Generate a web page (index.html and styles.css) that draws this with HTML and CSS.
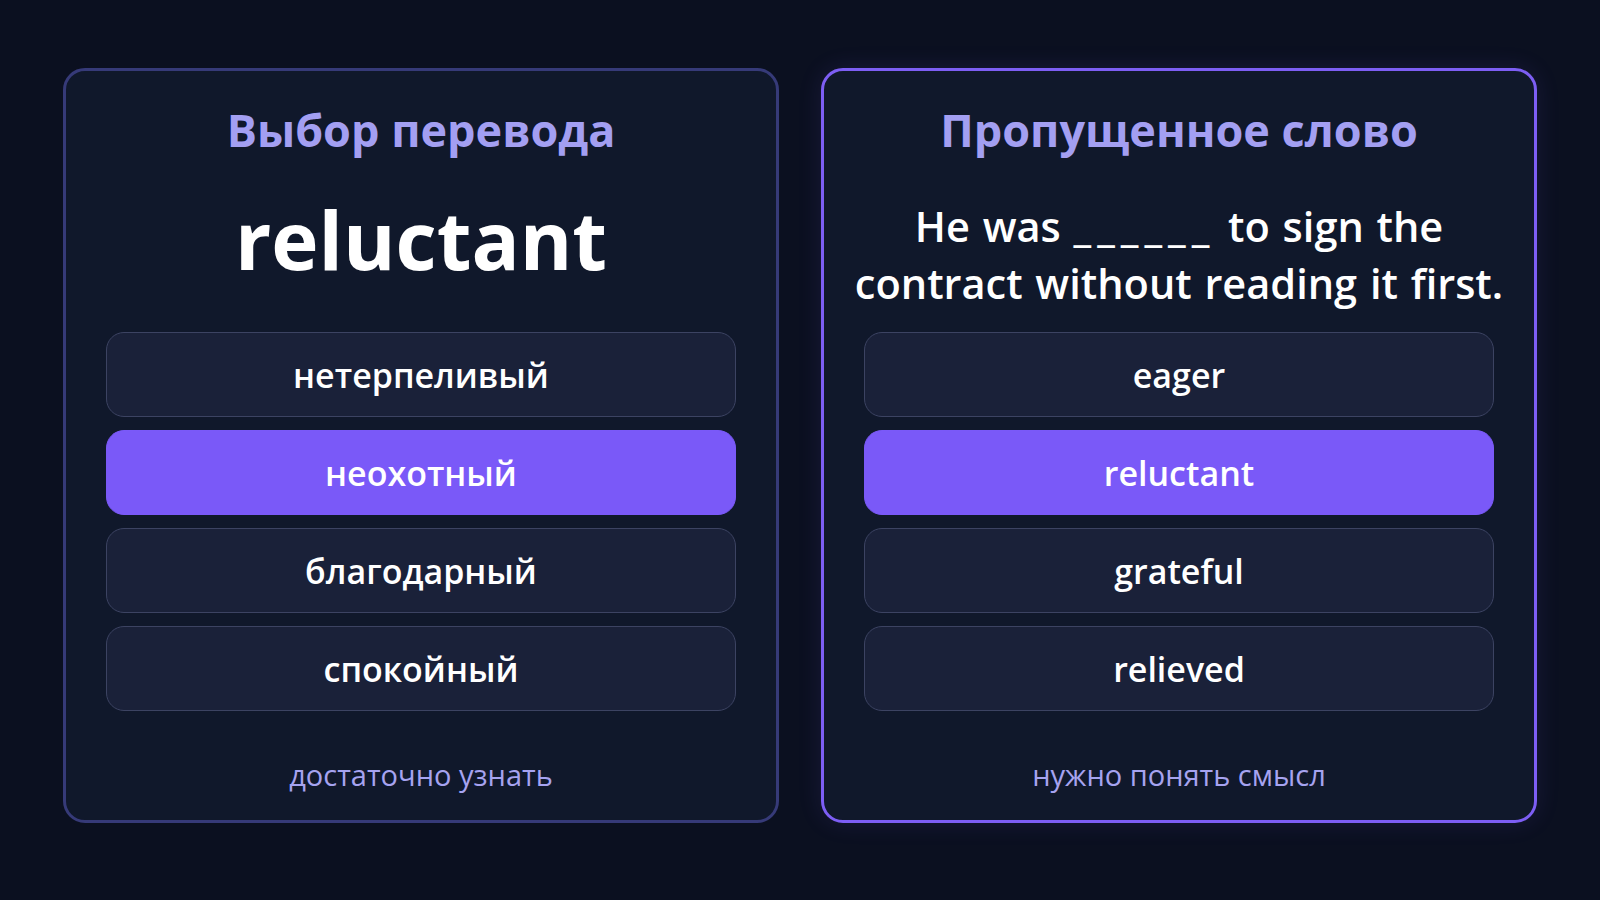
FILE: index.html
```html
<!DOCTYPE html>
<html lang="ru">

<head>
  <meta charset="utf-8">
  <title>Выбор перевода и пропущенное слово</title>
  <link rel="stylesheet" href="styles.css">
</head>

<body>
  <main class="compare">
    <section class="quiz-card">
      <h2 class="quiz-title">Выбор перевода</h2>
      <div class="prompt">
        <p class="prompt-word">reluctant</p>
      </div>
      <div class="options">
        <div class="option">нетерпеливый</div>
        <div class="option option-active">неохотный</div>
        <div class="option">благодарный</div>
        <div class="option">спокойный</div>
      </div>
      <p class="quiz-note">достаточно узнать</p>
    </section>

    <section class="quiz-card quiz-card-active">
      <h2 class="quiz-title">Пропущенное слово</h2>
      <div class="prompt">
        <p class="prompt-sentence">He was <span class="blank">______</span> to sign the<br>contract without reading it first.</p>
      </div>
      <div class="options">
        <div class="option">eager</div>
        <div class="option option-active">reluctant</div>
        <div class="option">grateful</div>
        <div class="option">relieved</div>
      </div>
      <p class="quiz-note">нужно понять смысл</p>
    </section>
  </main>
</body>

</html>
```

FILE: styles.css
```css
* {
  box-sizing: border-box;
}

body {
  margin: 0;
  height: 900px;
  background-color: #0b1020;
  font-family: 'Open Sans', 'Noto Sans', sans-serif;
  color: #ffffff;
}

.compare {
  display: flex;
  justify-content: center;
  gap: 42px;
  padding-top: 68px;
}

/* one exercise card */
.quiz-card {
  width: 716px;
  height: 755px;
  display: flex;
  flex-direction: column;
  padding: 35px 40px 0;
  background-color: #10182b;
  border: 3px solid #363a78;
  border-radius: 22px;
}

.quiz-card-active {
  border-color: #7d5ef4;
  box-shadow: 0 0 24px rgba(123, 92, 242, 0.12);
}

.quiz-title {
  margin: 0;
  text-align: center;
  font-size: 45px;
  line-height: 48px;
  font-weight: 700;
  color: #a39ff2;
}

.prompt {
  height: 178px;
  display: flex;
  align-items: center;
  justify-content: center;
  text-align: center;
}

.prompt-word {
  margin: 0;
  padding-bottom: 8px;
  font-size: 80px;
  line-height: 1;
  font-weight: 700;
}

.prompt-sentence {
  margin: 0;
  padding-top: 24px;
  font-size: 41.5px;
  line-height: 57px;
  font-weight: 600;
  white-space: nowrap;
  word-spacing: 2px;
}

.blank {
  letter-spacing: 6px;
}

.options {
  display: flex;
  flex-direction: column;
  gap: 13px;
}

.option {
  height: 85px;
  display: flex;
  align-items: center;
  justify-content: center;
  background-color: #1a2139;
  border: 1.5px solid #3c4362;
  border-radius: 18px;
  font-size: 34px;
  font-weight: 600;
}

.option-active {
  background-color: #7a59f8;
  border-color: #7a59f8;
}

.quiz-note {
  margin: auto 0 0;
  padding-bottom: 29px;
  text-align: center;
  font-size: 29px;
  line-height: 32px;
  font-weight: 500;
  color: #a6a3f0;
}
```
